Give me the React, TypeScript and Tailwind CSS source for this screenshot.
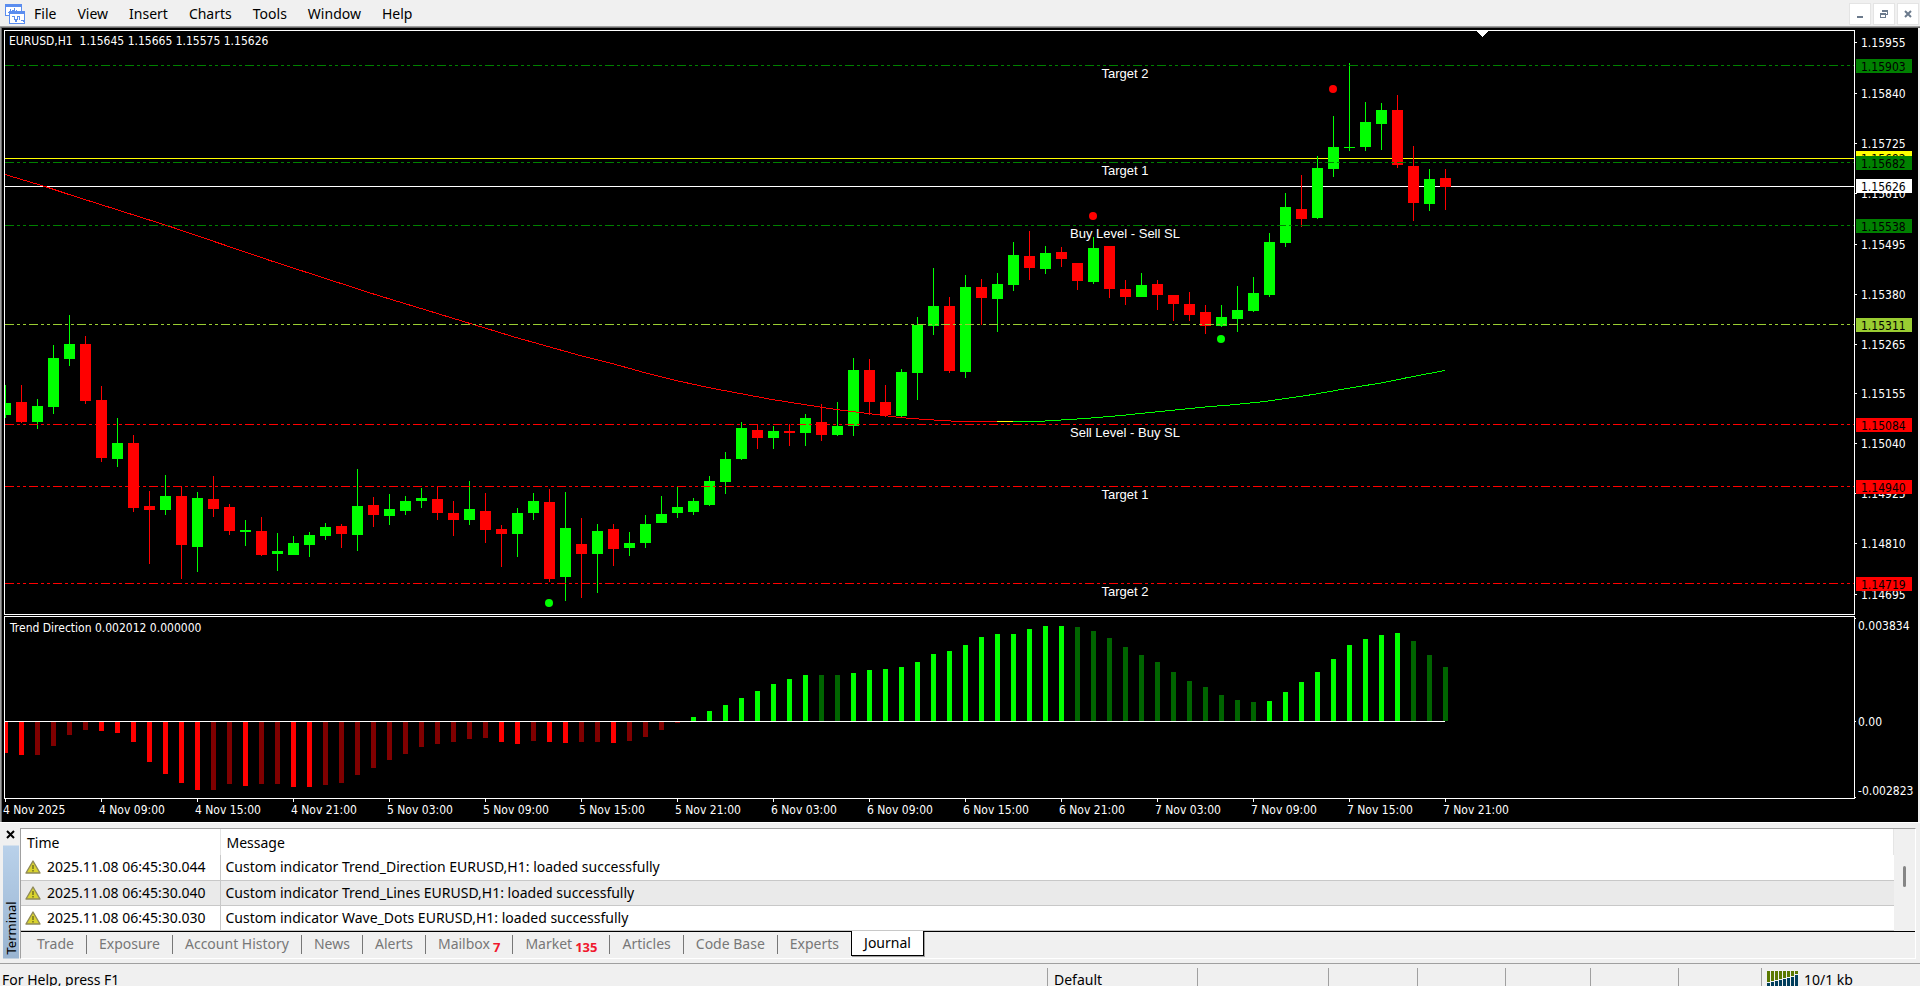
import React, { useState } from 'react';
import { clsx } from 'clsx';

type Dir = 'up' | 'down';
type Candle = [Dir, number, number, number, number];

const UP = '#00ff00';
const DOWN = '#ff0000';
const STEP = 16;

// direction, high, body top, body bottom, low (window rows)
const candles: Candle[] = [
  ['up', 385, 403, 415, 418],
  ['down', 385, 402, 422, 423],
  ['up', 399, 406, 422, 429],
  ['up', 345, 358, 407, 414],
  ['up', 315, 344, 359, 366],
  ['down', 336, 344, 401, 404],
  ['down', 386, 400, 458, 462],
  ['up', 418, 443, 459, 467],
  ['down', 435, 443, 508, 512],
  ['down', 491, 506, 510, 564],
  ['up', 475, 496, 510, 515],
  ['down', 486, 496, 545, 579],
  ['up', 492, 498, 547, 572],
  ['down', 476, 499, 509, 517],
  ['down', 504, 507, 531, 535],
  ['up', 520, 530, 532, 546],
  ['down', 517, 531, 555, 556],
  ['up', 533, 551, 554, 571],
  ['up', 536, 543, 555, 555],
  ['up', 532, 535, 545, 557],
  ['up', 523, 527, 536, 540],
  ['down', 524, 526, 534, 548],
  ['up', 469, 506, 535, 551],
  ['down', 497, 505, 515, 527],
  ['up', 494, 509, 516, 525],
  ['up', 496, 501, 511, 515],
  ['up', 488, 498, 501, 508],
  ['down', 486, 499, 513, 520],
  ['down', 501, 513, 520, 536],
  ['up', 481, 509, 520, 525],
  ['down', 493, 511, 530, 543],
  ['down', 525, 529, 534, 567],
  ['up', 508, 513, 534, 557],
  ['up', 493, 501, 513, 520],
  ['down', 489, 502, 579, 582],
  ['up', 492, 528, 577, 601],
  ['down', 518, 544, 554, 598],
  ['up', 524, 531, 554, 593],
  ['down', 524, 529, 549, 566],
  ['up', 532, 543, 548, 556],
  ['up', 515, 524, 543, 548],
  ['up', 496, 514, 523, 523],
  ['up', 486, 507, 513, 518],
  ['up', 498, 501, 512, 515],
  ['up', 476, 481, 505, 506],
  ['up', 452, 459, 482, 494],
  ['up', 422, 428, 459, 460],
  ['down', 424, 430, 438, 449],
  ['up', 426, 431, 438, 449],
  ['down', 424, 431, 433, 446],
  ['up', 414, 418, 433, 446],
  ['down', 404, 422, 435, 441],
  ['up', 402, 426, 435, 436],
  ['up', 358, 370, 426, 436],
  ['down', 359, 370, 402, 415],
  ['down', 385, 402, 415, 417],
  ['up', 369, 372, 416, 417],
  ['up', 317, 325, 373, 400],
  ['up', 268, 306, 326, 335],
  ['down', 297, 306, 371, 373],
  ['up', 275, 287, 372, 378],
  ['down', 279, 287, 298, 325],
  ['up', 273, 284, 299, 332],
  ['up', 242, 255, 285, 291],
  ['down', 231, 256, 268, 280],
  ['up', 246, 253, 269, 274],
  ['down', 247, 252, 259, 267],
  ['down', 263, 263, 281, 290],
  ['up', 237, 248, 282, 284],
  ['down', 246, 246, 289, 298],
  ['down', 280, 289, 297, 305],
  ['up', 273, 285, 297, 297],
  ['down', 280, 284, 295, 310],
  ['down', 295, 295, 304, 321],
  ['down', 292, 304, 315, 321],
  ['down', 305, 312, 326, 334],
  ['up', 305, 317, 326, 327],
  ['up', 286, 310, 319, 332],
  ['up', 277, 293, 311, 312],
  ['up', 233, 242, 295, 297],
  ['up', 193, 207, 243, 247],
  ['down', 175, 209, 219, 227],
  ['up', 156, 168, 218, 219],
  ['up', 116, 147, 169, 177],
  ['up', 63, 147, 148, 151],
  ['up', 102, 122, 147, 151],
  ['up', 103, 110, 124, 150],
  ['down', 95, 110, 165, 168],
  ['down', 146, 166, 203, 221],
  ['up', 169, 179, 204, 211],
  ['down', 169, 178, 187, 210],
];

const levels = [
  { y: 65, price: '1.15903', color: '#008000', label: 'Target 2' },
  { y: 162, price: '1.15682', color: '#008000', label: 'Target 1' },
  { y: 225, price: '1.15538', color: '#008000', label: 'Buy Level - Sell SL' },
  { y: 324, price: '1.15311', color: '#9acd32', label: '' },
  { y: 424, price: '1.15084', color: '#ff0000', label: 'Sell Level - Buy SL' },
  { y: 486, price: '1.14940', color: '#ff0000', label: 'Target 1' },
  { y: 583, price: '1.14719', color: '#ff0000', label: 'Target 2' },
];

const priceTicks: [number, string][] = [
  [42, '1.15955'],
  [93, '1.15840'],
  [143, '1.15725'],
  [193, '1.15610'],
  [244, '1.15495'],
  [294, '1.15380'],
  [344, '1.15265'],
  [393, '1.15155'],
  [443, '1.15040'],
  [493, '1.14925'],
  [543, '1.14810'],
  [594, '1.14695'],
];

const dots: [number, number, string][] = [
  [549, 603, UP],
  [1093, 216, DOWN],
  [1221, 339, UP],
  [1333, 89, DOWN],
];

const maDown =
  '5,174 45,186 69,194 170,226 270,260 375,294 480,326 516,337 548,346 580,355 612,363 644,372 676,380 708,387 740,393 772,399 804,404 836,409 868,413 900,417 925,419 960,421 997,421';
const maUp =
  '1013,421 1037,421 1053,420 1085,418 1121,415 1150,412 1180,409 1210,406 1225,405 1265,401 1313,394 1347,388 1384,382 1408,377 1445,370';

// histogram heights from the zero line
const trend = [
  -31, -33, -33, -24, -13, -8, -9, -11, -20, -40, -52, -61, -68, -68, -62, -64, -62, -62, -65, -65,
  -63, -61, -53, -46, -38, -32, -25, -22, -20, -17, -16, -20, -22, -19, -20, -21, -20, -20, -21, -19,
  -15, -8, -1, 4, 10, 16, 23, 30, 37, 42, 46, 46, 46, 48, 51, 52, 54, 59, 67, 70, 76, 84, 87, 87, 92,
  95, 95, 94, 90, 83, 74, 66, 59, 49, 40, 34, 26, 21, 19, 20, 29, 39, 49, 62, 76, 82, 86, 88, 80, 66,
  54,
];

// bars where the trend is losing strength
const weak = new Set([
  2, 3, 4, 5, 13, 14, 16, 17, 20, 21, 22, 23, 24, 25, 26, 27, 28, 29, 30, 33, 36, 37, 39, 40, 41, 42,
  51, 52, 67, 68, 69, 70, 71, 72, 73, 74, 75, 76, 77, 78, 88, 89, 90,
]);

const times = [
  '4 Nov 2025',
  '4 Nov 09:00',
  '4 Nov 15:00',
  '4 Nov 21:00',
  '5 Nov 03:00',
  '5 Nov 09:00',
  '5 Nov 15:00',
  '5 Nov 21:00',
  '6 Nov 03:00',
  '6 Nov 09:00',
  '6 Nov 15:00',
  '6 Nov 21:00',
  '7 Nov 03:00',
  '7 Nov 09:00',
  '7 Nov 15:00',
  '7 Nov 21:00',
];

const menu = ['File', 'View', 'Insert', 'Charts', 'Tools', 'Window', 'Help'];

const tabs = [
  { name: 'Trade' },
  { name: 'Exposure' },
  { name: 'Account History' },
  { name: 'News' },
  { name: 'Alerts' },
  { name: 'Mailbox', count: 7 },
  { name: 'Market', count: 135 },
  { name: 'Articles' },
  { name: 'Code Base' },
  { name: 'Experts' },
  { name: 'Journal' },
];

const journal = [
  ['2025.11.08 06:45:30.044', 'Custom indicator Trend_Direction EURUSD,H1: loaded successfully'],
  ['2025.11.08 06:45:30.040', 'Custom indicator Trend_Lines EURUSD,H1: loaded successfully'],
  ['2025.11.08 06:45:30.030', 'Custom indicator Wave_Dots EURUSD,H1: loaded successfully'],
];

function AppIcon() {
  return (
    <svg width="22" height="22" viewBox="0 0 22 22" shapeRendering="crispEdges" className="shrink-0">
      <rect x="1" y="1" width="17" height="12" fill="#5b8def" />
      <rect x="2" y="4" width="15" height="8" fill="#fff" />
      <path d="M4 9h2M6 6v4M8 7h2M10 5v4M12 7v2" stroke="#5b8def" fill="none" />
      <rect x="5" y="8" width="16" height="13" fill="#5b8def" />
      <rect x="6" y="11" width="14" height="9" fill="#fff" />
      <path d="M8 13h2v3h1v2h1v-2h1v-3h2v4M17 17h2v2" stroke="#5b8def" fill="none" />
    </svg>
  );
}

function WarningIcon() {
  return (
    <svg width="16" height="14" viewBox="0 0 16 14" className="shrink-0">
      <path d="M8 1L15 13H1Z" fill="#d9d32e" stroke="#8f8a5a" strokeWidth="1.4" strokeLinejoin="round" />
      <path d="M8 5v4M8 10v1.5" stroke="#6b6820" strokeWidth="1.4" />
    </svg>
  );
}

function SignalIcon() {
  return (
    <svg width="32" height="20" viewBox="0 0 32 20" shapeRendering="crispEdges" className="shrink-0">
      {[11, 10, 9, 8, 7, 6, 5, 3].map((h, i) => (
        <g key={i}>
          <rect x={i * 4} y="0" width="3" height={h} fill="#5a7800" />
          <rect x={i * 4} y={h + 1} width="3" height={19 - h} fill="#003d5c" />
        </g>
      ))}
    </svg>
  );
}

function MenuBar() {
  return (
    <header className="flex h-[26px] shrink-0 items-center justify-between pt-[2px]">
      <div className="flex items-center pl-1">
        <AppIcon />
        <nav className="flex gap-px">
          {menu.map((item) => (
            <button key={item} className="px-[10px] leading-5 hover:bg-[#cce8ff] first:pl-2">
              {item}
            </button>
          ))}
        </nav>
      </div>
      <div className="flex gap-[2px] pr-px text-[#6b7a8c]">
        <button aria-label="Minimize" className="flex h-[22px] w-[22px] items-center justify-center border border-[#e4e4e4] bg-white">
          <svg width="12" height="12" shapeRendering="crispEdges">
            <rect x="3" y="8" width="6" height="2" fill="currentColor" />
          </svg>
        </button>
        <button aria-label="Restore" className="flex h-[22px] w-[22px] items-center justify-center border border-[#e4e4e4] bg-white">
          <svg width="12" height="12" shapeRendering="crispEdges" fill="none" stroke="currentColor">
            <path d="M4 3V2.5H9.500V6.500H8M4 3H9" />
            <rect x="2.500" y="5.500" width="5" height="4" />
            <path d="M2 6.500H8" />
          </svg>
        </button>
        <button aria-label="Close" className="flex h-[22px] w-[22px] items-center justify-center border border-[#e4e4e4] bg-white">
          <svg width="12" height="12" stroke="currentColor" strokeWidth="2">
            <path d="M3 3L9 9M9 3L3 9" />
          </svg>
        </button>
      </div>
    </header>
  );
}

function PricePlot() {
  return (
    <div className="min-w-0 flex-1 border border-white">
      <svg width="100%" height="583" className="block" shapeRendering="crispEdges">
        <line x1="0" x2="100%" y1="127.500" y2="127.500" stroke="#ffff00" />
        <line x1="0" x2="100%" y1="155.500" y2="155.500" stroke="#ffffff" />
        <g transform="translate(-5 -31)">
          {candles.map(([dir, high, top, bottom, low], i) => {
            const x = 5 + i * STEP;
            return (
              <g key={i} fill={dir === 'up' ? UP : DOWN}>
                <rect x={x} y={high} width="1" height={low - high} />
                <rect x={x - 5} y={top} width="11" height={bottom - top} />
              </g>
            );
          })}
          <polyline points={maDown} fill="none" stroke={DOWN} transform="translate(0 0.5)" />
          <path d="M997 421.500H1013" stroke="#ffff00" />
          <polyline points={maUp} fill="none" stroke={UP} transform="translate(0 0.5)" />
          {dots.map(([x, y, color]) => (
            <circle key={x} cx={x} cy={y} r="4" fill={color} shapeRendering="auto" />
          ))}
          <path d="M1476 31H1488L1482 37Z" fill="#fff" />
        </g>
        {levels.map((l) => (
          <line
            key={l.y}
            x1="0"
            x2="100%"
            y1={l.y - 30.5}
            y2={l.y - 30.5}
            stroke={l.color}
            strokeDasharray="9 3 3 3 3 3"
          />
        ))}
        <g fill="#fff" className="font-['Liberation_Sans',Arial,sans-serif] text-[13px]" textAnchor="middle">
          {levels.map((l) => (
            <text key={l.y} x="1120" y={l.y - 18}>
              {l.label}
            </text>
          ))}
        </g>
        <text x="4" y="14" fill="#fff" className="whitespace-pre">
          {'EURUSD,H1  1.15645 1.15665 1.15575 1.15626'}
        </text>
      </svg>
    </div>
  );
}

function PriceTag({ y, price, color }: { y: number; price: string; color: string }) {
  return (
    <g>
      <rect x="1" y={y} width="56" height="14" fill={color} />
      <text x="6" y={y + 12} fill="#000">
        {price}
      </text>
    </g>
  );
}

function PriceAxis() {
  return (
    <svg width="63" height="585" className="block shrink-0" shapeRendering="crispEdges">
      <g transform="translate(0 -30)">
        {priceTicks.map(([y, price]) => (
          <g key={price} fill="#fff">
            <rect x="0" y={y} width="2" height="1" />
            <text x="6" y={y + 5}>
              {price}
            </text>
          </g>
        ))}
        <PriceTag y={151} price="1.15692" color="#ffff00" />
        <PriceTag y={179} price="1.15626" color="#ffffff" />
        {levels.map((l) => (
          <PriceTag key={l.y} y={l.y - 6} price={l.price} color={l.color} />
        ))}
      </g>
    </svg>
  );
}

function TrendPlot() {
  return (
    <div className="min-w-0 flex-1 border border-white">
      <svg width="100%" height="181" className="block" shapeRendering="crispEdges">
        {trend.map((v, i) => {
          const color = v > 0 ? (weak.has(i) ? '#006400' : UP) : weak.has(i) ? '#800000' : DOWN;
          return (
            <rect
              key={i}
              x={i * STEP - 2}
              y={v > 0 ? 104 - v : 105}
              width="5"
              height={Math.abs(v)}
              fill={color}
            />
          );
        })}
        <path d="M0 104.500H1440" stroke="#fff" />
        <text x="5" y="15" fill="#fff">
          Trend Direction 0.002012 0.000000
        </text>
      </svg>
    </div>
  );
}

function TrendAxis() {
  return (
    <svg width="63" height="183" className="block shrink-0" fill="#fff" shapeRendering="crispEdges">
      <rect x="0" y="2" width="1" height="1" />
      <rect x="0" y="105" width="1" height="1" />
      <rect x="0" y="181" width="1" height="1" />
      <text x="3" y="14">0.003834</text>
      <text x="3" y="110">0.00</text>
      <text x="3" y="179">-0.002823</text>
    </svg>
  );
}

function Chart() {
  return (
    <main className="shrink-0 border-y border-t-[#a0a0a0] border-b-white">
      <div className="border-t border-l border-[#696969] border-l-[#a0a0a0] pr-[2px]">
        <div className="flex flex-col gap-px border-l border-[#696969] bg-black pt-[2px] pl-[2px] font-['DejaVu_Sans_Condensed','DejaVu_Sans',sans-serif] text-[12px]">
          <div className="flex">
            <PricePlot />
            <PriceAxis />
          </div>
          <div className="flex">
            <TrendPlot />
            <TrendAxis />
          </div>
          <svg width="100%" height="23" className="-mt-px block overflow-visible" fill="#fff" shapeRendering="crispEdges">
            {times.map((t, i) => (
              <g key={t}>
                <rect x={1 + i * 96} y="0" width="1" height="3" />
                <text x={i * 96 - 1} y="15">
                  {t}
                </text>
              </g>
            ))}
          </svg>
        </div>
      </div>
    </main>
  );
}

function Terminal() {
  const [active, setActive] = useState('Journal');

  return (
    <section className="flex shrink-0 pt-[5px] pr-1">
      <div className="flex w-5 shrink-0 flex-col items-end pr-px">
        <button aria-label="Close terminal" className="flex h-[18px] items-start pt-[2px] pr-1">
          <svg width="9" height="9" stroke="#000" strokeWidth="2">
            <path d="M1 1L8 8M8 1L1 8" />
          </svg>
        </button>
        <div className="flex w-4 flex-1 rotate-180 items-center bg-gradient-to-t from-[#b9d1ea] to-[#99b4d1] pt-1 text-[13px] leading-4 font-normal [writing-mode:vertical-rl]">
          Terminal
        </div>
      </div>
      <div className="min-w-0 flex-1 border border-[#a0a0a0] border-r-white border-b-white">
        <div className="flex border-b border-black bg-[#f0f0f0]">
          <div className="flex-1 bg-white">
            <table className="w-full table-fixed border-collapse text-left">
              <thead>
                <tr className="h-[26px]">
                  <th className="w-[199px] border-r border-[#e5e5e5] pl-[6px] font-normal">Time</th>
                  <th className="border-r border-[#e5e5e5] pl-[6px] font-normal">Message</th>
                </tr>
              </thead>
              <tbody>
                {journal.map(([time, message], i) => (
                  <tr key={time} className={clsx('h-[25px] border-b border-[#c8c8c8]', i === 1 && 'bg-[#eaeaea]')}>
                    <td className="border-r border-[#c8c8c8] pl-1">
                      <div className="flex items-center gap-[6px] leading-5">
                        <WarningIcon />
                        {time}
                      </div>
                    </td>
                    <td className="pl-[5px] leading-5">{message}</td>
                  </tr>
                ))}
              </tbody>
            </table>
          </div>
          <div className="flex w-[21px] justify-center pt-[37px]">
            <div className="h-[21px] w-[3px] rounded-sm bg-[#868686]" />
          </div>
        </div>
        <div role="tablist" className="flex h-[26px] items-start">
          {tabs.map((tab, i) => {
            const selected = tab.name === active;
            return (
              <React.Fragment key={tab.name}>
                {i > 0 && !selected && tabs[i - 1].name !== active && (
                  <span className="mt-[3px] h-[19px] w-px bg-[#777]" />
                )}
                <button
                  role="tab"
                  aria-selected={selected}
                  onClick={() => setActive(tab.name)}
                  className={clsx(
                    'flex items-baseline px-3 leading-6',
                    i === 0 && 'pl-4',
                    selected
                      ? '-mt-px border border-t-0 border-black bg-white text-black shadow-[1px_1px_0_#a0a0a0]'
                      : 'text-[#777]',
                  )}
                >
                  {tab.name}
                  {tab.count && <sub className="ml-[3px] text-[13px] font-bold text-[#f0182d]">{tab.count}</sub>}
                </button>
              </React.Fragment>
            );
          })}
        </div>
      </div>
    </section>
  );
}

function StatusBar() {
  const cell = 'shrink-0 border-l border-[#a0a0a0]';
  return (
    <footer className="mt-[4px] flex h-7 shrink-0 border-t border-[#a0a0a0] pt-1 pl-[2px] leading-6">
      <div className="min-w-0 flex-1">For Help, press F1</div>
      <div className={clsx(cell, 'w-[150px] pl-[6px]')}>Default</div>
      <div className={clsx(cell, 'w-[131px]')} />
      <div className={clsx(cell, 'w-[89px]')} />
      <div className={clsx(cell, 'w-[88px]')} />
      <div className={clsx(cell, 'w-[85px]')} />
      <div className={clsx(cell, 'w-[88px]')} />
      <div className={clsx(cell, 'w-[83px]')} />
      <div className={clsx(cell, 'flex w-[159px] gap-[5px] pl-[5px]')}>
        <div className="pt-[3px]">
          <SignalIcon />
        </div>
        10/1 kb
      </div>
    </footer>
  );
}

export default function App() {
  return (
    <div className="flex h-screen flex-col overflow-hidden bg-[#f0f0f0] font-['Noto_Sans','Open_Sans',sans-serif] text-[14px] text-black">
      <MenuBar />
      <Chart />
      <Terminal />
      <StatusBar />
    </div>
  );
}
